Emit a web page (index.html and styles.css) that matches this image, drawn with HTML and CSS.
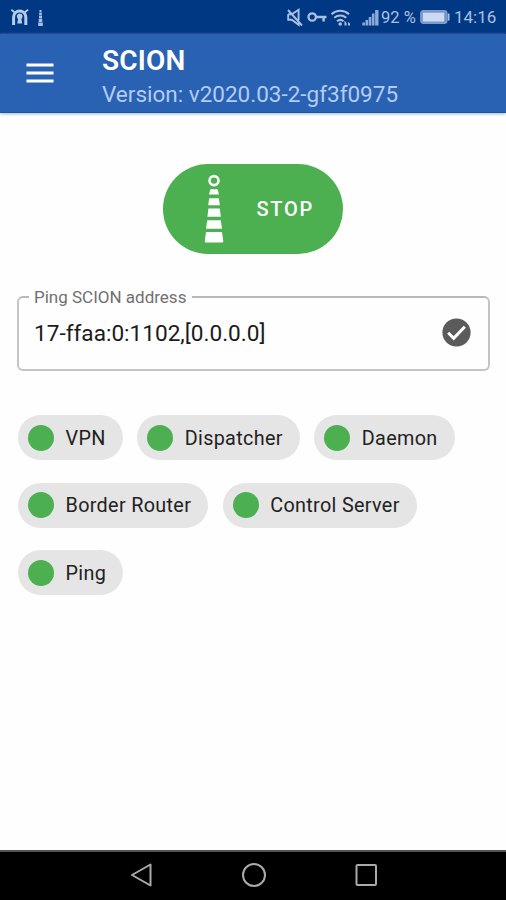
FILE: index.html
```html
<!DOCTYPE html>
<html lang="en">
<head>
<meta charset="utf-8">
<title>SCION</title>
<link rel="stylesheet" href="styles.css">
</head>
<body>
<div class="screen">
  <div class="status">
    <svg class="notices" width="40" height="22" viewBox="0 0 40 22">
      <g fill="none" stroke="#b5cbea" stroke-width="3"><path d="M2.600 19V11a6.100 6.100 0 0 1 12.200 0v8"/><path d="M.3 3.800l3.600 2.600M17.100 3.800l-3.600 2.600" stroke-width="1.800"/></g>
      <path d="M8.700 7.500a3 3 0 0 1 1.700 5.400l.8 4.600H6.200l.8-4.600a3 3 0 0 1 1.700-5.400z" fill="#b5cbea"/>
      <path d="M28.500 4h2v2h-2zM28.200 6.500h2.600v2.700h-2.600zM28 9.700h3v2.700h-3zM27.700 12.900h3.600V16h-3.600zM27.200 16.500h4.600v3.500h-4.600z" fill="#a5bee3"/>
    </svg>
    <div class="system">
      <svg width="94" height="22" viewBox="0 0 94 22">
        <g fill="none" stroke="#a9c0e3" stroke-width="1.900">
          <path d="M1.200 8.300h3.600l6.800-4.500v10.500M1.200 8.300v5.500h3.600l6.800 5v-3M1 4l14 15.500"/>
          <circle cx="25.200" cy="11" r="3.700" stroke-width="2.300"/>
          <path d="M29 11h10.500M36.600 11v4.500" stroke-width="2.500"/>
          <path d="M44.500 8.200a13 13 0 0 1 17.500 0M47.300 11.800a9 9 0 0 1 11.900 0M50 15.300a5 5 0 0 1 6.500 0" stroke-width="2"/>
        </g>
        <circle cx="53.200" cy="18" r="1.800" fill="#a9c0e3"/>
        <path d="M57.500 14.500l2 2.500v2.500h-2zM61 16l2 1.500v2h-2z" fill="#a9c0e3"/>
        <path d="M75.300 16.500h2.600v3h-2.600zM78.500 14h2.600v5.500h-2.600zM81.700 11h2.600v8.500h-2.600zM84.900 7.500h2.600v12h-2.600zM88.100 4h3.400v15.500h-3.400z" fill="#8caad7"/>
      </svg>
      <span class="percent">92 %</span>
      <svg class="battery" width="30" height="16" viewBox="0 0 30 16">
        <rect x=".8" y="1.800" width="26" height="12.500" rx="2.500" fill="#6f8fc3" stroke="#7f9dcc" stroke-width="1.400"/>
        <rect x="2.800" y="3.600" width="21.500" height="9" fill="#cbdaf2"/>
        <path d="M28.600 4.500v7" stroke="#a9c0e3" stroke-width="1.800"/>
      </svg>
      <span class="clock">14:16</span>
    </div>
  </div>

  <header class="appbar">
    <svg class="menu" width="28" height="20" viewBox="0 0 28 20"><path d="M.5 2h27M.5 10h27M.5 18h27" stroke="#fff" stroke-width="3"/></svg>
    <div class="titles">
      <h1>SCION</h1>
      <p>Version: v2020.03-2-gf3f0975</p>
    </div>
  </header>

  <main>
    <button class="stop">
      <svg width="20" height="70" viewBox="0 0 20 70">
        <circle cx="10" cy="6.600" r="4.500" fill="none" stroke="#fff" stroke-width="2.600"/>
        <path d="M6.300 15.200h7.400l1.200 5.300H5zM5.200 24.300h9.600l1.100 7H4.200zM4.400 34.600h11.400l1 8.200H3.400zM3.200 46.200h13.600l1.200 8.500H2zM2 58h16l1.300 9.200Q19.300 68.500 18 68.500H2Q.6 68.500.8 67z" fill="#fff"/>
      </svg>
      <span>STOP</span>
    </button>

    <fieldset class="field">
      <legend>Ping SCION address</legend>
      <span class="value">17-ffaa:0:1102,[0.0.0.0]</span>
      <svg width="29" height="29" viewBox="0 0 29 29"><circle cx="14.500" cy="14.500" r="14.100" fill="#5b5b5b"/><path d="M6.200 14.800l5.500 5.500L22.800 8.700" fill="none" stroke="#fff" stroke-width="3"/></svg>
    </fieldset>

    <div class="chips">
      <div class="chip"><i></i><span>VPN</span></div>
      <div class="chip"><i></i><span>Dispatcher</span></div>
      <div class="chip"><i></i><span>Daemon</span></div>
      <div class="chip"><i></i><span>Border Router</span></div>
      <div class="chip"><i></i><span>Control Server</span></div>
      <div class="chip"><i></i><span>Ping</span></div>
    </div>
  </main>

  <nav class="navbar">
    <svg width="24" height="26" viewBox="0 0 24 26"><path d="M2 13L20.500 2.500v21z" fill="none" stroke="#aaa" stroke-width="2" stroke-linejoin="round"/></svg>
    <svg width="26" height="26" viewBox="0 0 26 26"><circle cx="13" cy="13" r="11" fill="none" stroke="#aaa" stroke-width="2"/></svg>
    <svg width="24" height="26" viewBox="0 0 24 26"><rect x="2.500" y="3" width="19.500" height="20" rx="1" fill="none" stroke="#aaa" stroke-width="2"/></svg>
  </nav>
</div>
</body>
</html>
```
FILE: styles.css
```css
* { box-sizing: border-box; }
body { margin: 0; background: #fefefe; font-family: Roboto, sans-serif; }
.screen { width: 506px; height: 900px; display: flex; flex-direction: column; }
.status {
  height: 34px;
  flex: none;
  padding: 0 10px 0 11px;
  display: flex;
  align-items: center;
  justify-content: space-between;
  background: #003884;
  color: #a9c0e3;
  font-size: 17px;
}
.system { display: flex; align-items: center; }
.system svg { flex: none; }
.percent { width: 39px; white-space: nowrap; font-size: 16.500px; }
.battery { margin-right: 4px; }
.clock { width: 42px; }
.appbar {
  height: 79px;
  flex: none;
  padding-left: 26px;
  display: flex;
  align-items: center;
  background: #2962b3;
  border-bottom: 1px solid #1d559f;
  box-shadow: 0 1px 3px #9fb5cc;
}
.menu { margin-right: 48px; }
.titles { padding-top: 8px; }
h1 { margin: 0; color: #fff; font-size: 28px; line-height: 34px; font-weight: 600; letter-spacing: .2px; }
.titles p { margin: 0; color: #b4ccf2; font-size: 22.500px; line-height: 32px; }
main { flex: 1; display: flex; flex-direction: column; padding: 51px 16px 0 17px; }
.stop {
  align-self: center;
  width: 180px;
  height: 90px;
  margin-right: 1px;
  padding: 0 0 0 41px;
  border: 0;
  border-radius: 45px;
  display: flex;
  align-items: center;
  gap: 32.500px;
  background: #4caf50;
  color: #fff;
  font: 500 20px Roboto, sans-serif;
  letter-spacing: 1.700px;
}
.field {
  height: 84px;
  margin: 32.500px 0 0;
  padding: 11px 17.500px 0 15px;
  border: 2px solid #c4c4c4;
  border-top-color: #b8b8b8;
  border-radius: 6px;
  display: flex;
  align-items: center;
  justify-content: space-between;
}
.field legend { margin-left: -5px; padding: 0 6px 0 5px; color: #707070; font-size: 17px; line-height: 20px; }
.value { padding-top: 2px; color: #1b1b1b; font-size: 22.600px; }
.chips { display: flex; flex-wrap: wrap; gap: 22.500px 14.500px; margin: 44.500px 0 0 1px; }
.chip {
  height: 45px;
  padding: 0 17px 0 10px;
  border-radius: 23px;
  display: flex;
  align-items: center;
  gap: 11.500px;
  background: #e5e5e5;
  color: #222;
  font-size: 19.800px;
  letter-spacing: .33px;
}
.chip span { padding-top: 1px; }
.chip i { width: 26px; height: 26px; border-radius: 50%; background: #4caf50; }
.navbar {
  height: 50px;
  flex: none;
  padding: 0 128px 2px 130px;
  border-top: 2px solid #555;
  display: flex;
  align-items: center;
  justify-content: space-between;
  background: #000;
}
```
